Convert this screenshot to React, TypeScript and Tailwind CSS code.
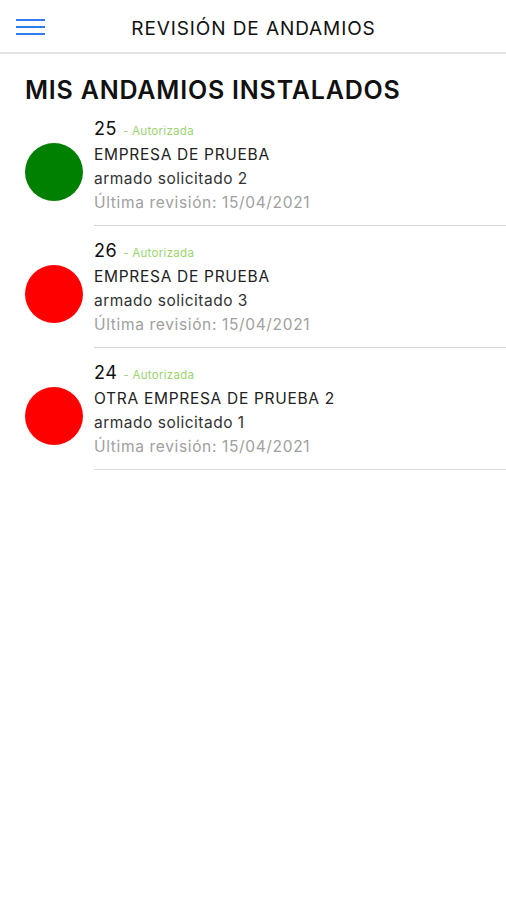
import React from "react";

const items = [
  { id: "25", color: "bg-[#008000]", company: "EMPRESA DE PRUEBA", desc: "armado solicitado 2" },
  { id: "26", color: "bg-[#ff0000]", company: "EMPRESA DE PRUEBA", desc: "armado solicitado 3" },
  { id: "24", color: "bg-[#ff0000]", company: "OTRA EMPRESA DE PRUEBA 2", desc: "armado solicitado 1" },
];

export default function App() {
  return (
    <div className="w-[506px] h-[900px] bg-white font-['Inter','Liberation_Sans',Arial,sans-serif] text-[#111]">
      <div className="h-[54px] border-b-2 border-[#e4e4e4] flex items-center relative">
        <div className="absolute left-[16px] top-[19px] w-[29px] flex flex-col gap-[5px]">
          <div className="h-[2px] bg-[#2f7cf0]" />
          <div className="h-[2px] bg-[#2f7cf0]" />
          <div className="h-[2px] bg-[#2f7cf0]" />
        </div>
        <div className="flex-1 text-center text-[19px] leading-[23px] pt-[4px] pl-[1px] tracking-[0.9px]">REVISIÓN DE ANDAMIOS</div>
      </div>
      <div className="pl-[25px] pt-[22px] text-[25px] font-semibold leading-[28px] tracking-[0.8px] text-[#111]">MIS ANDAMIOS INSTALADOS</div>
      <div>
        {items.map((it) => (
          <div key={it.id} className="flex h-[122px]">
            <div className="w-[94px] pl-[25px] pt-[39px]">
              <div className={`w-[58px] h-[58px] rounded-full ${it.color}`} />
            </div>
            <div className="flex-1 border-b border-[#d6d6d6] flex flex-col pt-[10px]">
              <div className="flex items-baseline leading-[29px] h-[29px]">
                <span className="text-[18px] tracking-[0.5px]">{it.id}</span>
                <span className="text-[11.5px] text-[#9ad470] ml-[6px] tracking-[0.3px]">- Autorizada</span>
              </div>
              <div className="text-[15.5px] leading-[24px] tracking-[0.7px] text-[#222]">{it.company}</div>
              <div className="text-[15.5px] leading-[24px] tracking-[0.5px] text-[#333]">{it.desc}</div>
              <div className="text-[15.5px] leading-[24px] tracking-[0.65px] text-[#a0a0a0]">Última revisión: 15/04/2021</div>
            </div>
          </div>
        ))}
      </div>
    </div>
  );
}
